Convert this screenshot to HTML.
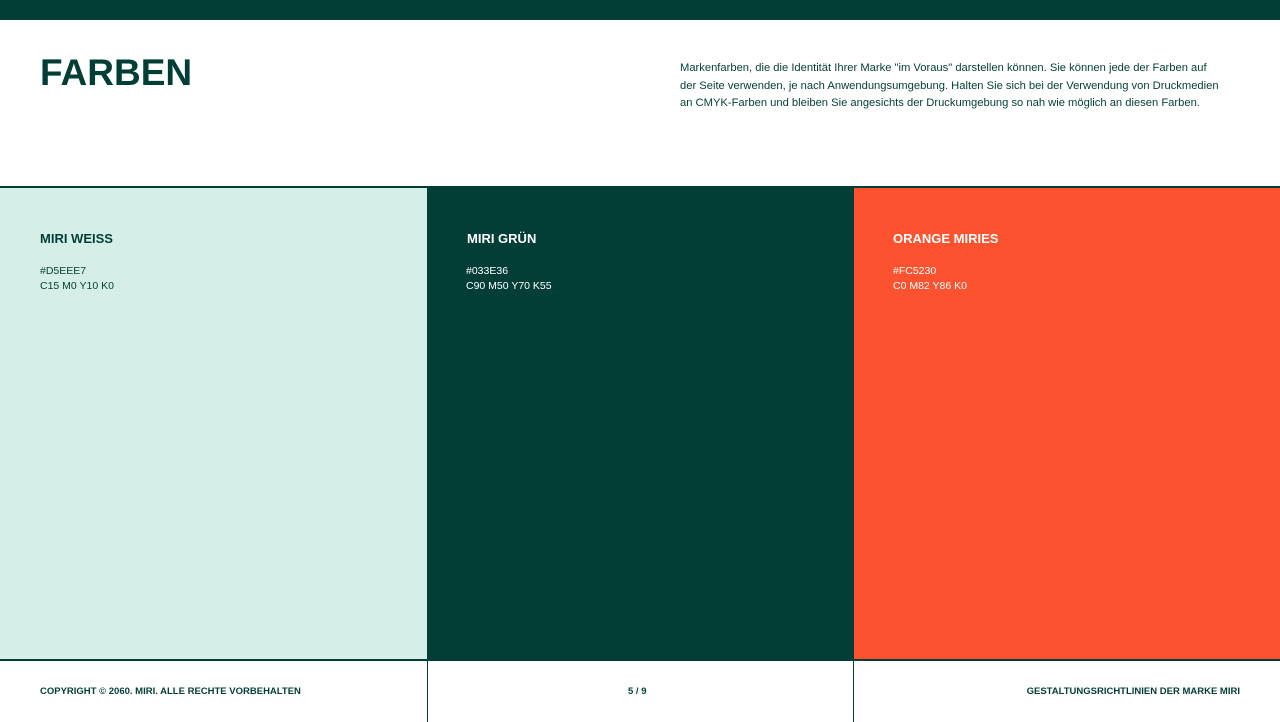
<!DOCTYPE html>
<html><head><meta charset="utf-8"><style>
*{margin:0;padding:0;box-sizing:border-box}
body{width:1280px;height:720px;position:relative;background:#fff;font-family:"Liberation Sans",sans-serif;color:#033e36;overflow:hidden}
.top{position:absolute;left:0;top:0;width:1280px;height:20px;background:#033e36}
h1{position:absolute;left:40px;top:53px;font-size:37px;font-weight:900;line-height:40px}
.desc{position:absolute;left:680px;top:60px;width:540px;font-size:11.2px;line-height:17.5px}
.line{position:absolute;left:0;top:186px;width:1280px;height:2px;background:#033e36}
.col{position:absolute;top:188px;height:472px;width:427px}
.col h2{position:absolute;left:40px;top:43px;font-size:13px;font-weight:700}
.col p{position:absolute;left:40px;top:76px;font-size:10.5px;line-height:15px}
.foot{position:absolute;top:659px;left:0;width:1280px;height:61px;border-top:2px solid #033e36}
.f{position:absolute;top:25px;font-size:9.5px;font-weight:700}
.v{position:absolute;top:0;width:1px;height:61px;background:#033e36}
</style></head><body>
<div class="top"></div>
<h1>FARBEN</h1>
<div class="desc">Markenfarben, die die Identität Ihrer Marke "im Voraus" darstellen können. Sie können jede der Farben auf<br>der Seite verwenden, je nach Anwendungsumgebung. Halten Sie sich bei der Verwendung von Druckmedien<br>an CMYK-Farben und bleiben Sie angesichts der Druckumgebung so nah wie möglich an diesen Farben.</div>
<div class="line"></div>
<div class="col" style="left:0;background:#d5eee7"><h2>MIRI WEISS</h2><p>#D5EEE7<br>C15 M0 Y10 K0</p></div>
<div class="col" style="left:427px;background:#033e36;color:#fff"><h2>MIRI GRÜN</h2><p style="left:39px">#033E36<br>C90 M50 Y70 K55</p></div>
<div class="col" style="left:854px;width:426px;background:#fc5230;color:#fff"><h2 style="left:39px">ORANGE MIRIES</h2><p style="left:39px">#FC5230<br>C0 M82 Y86 K0</p></div>
<div class="foot">
<div class="v" style="left:427px"></div><div class="v" style="left:853px"></div>
<div class="f" style="left:40px">COPYRIGHT © 2060. MIRI. ALLE RECHTE VORBEHALTEN</div>
<div class="f" style="left:628px">5 / 9</div>
<div class="f" style="right:40px">GESTALTUNGSRICHTLINIEN DER MARKE MIRI</div>
</div>
</body></html>
